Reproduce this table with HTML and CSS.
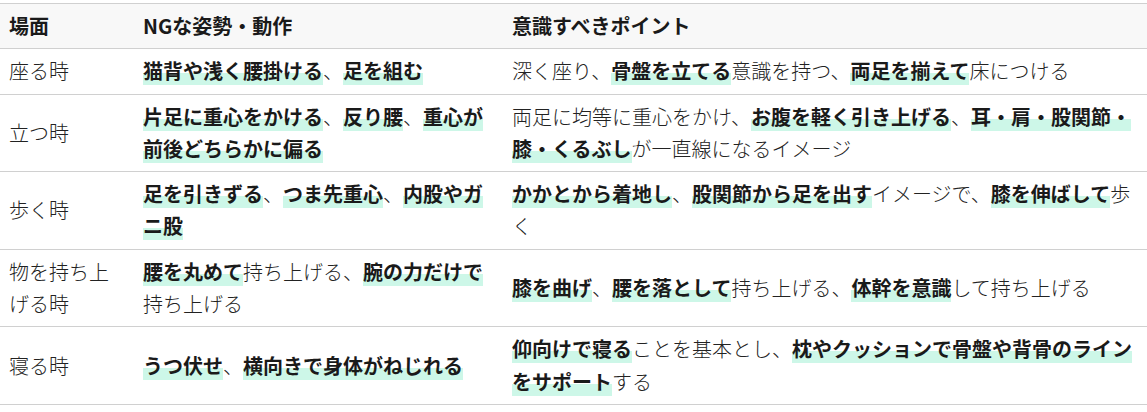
FILE: index.html
```html
<!DOCTYPE html>
<html lang="ja">
<head>
<meta charset="utf-8">
<title>姿勢のポイント</title>
<link rel="stylesheet" href="styles.css">
</head>
<body>
<table class="posture">
  <colgroup>
    <col class="c1"><col class="c2"><col class="c3">
  </colgroup>
  <thead>
    <tr><th>場面</th><th>NGな姿勢・動作</th><th>意識すべきポイント</th></tr>
  </thead>
  <tbody>
    <tr>
      <td>座る時</td>
      <td><b>猫背や浅く腰掛ける</b>、<b>足を組む</b></td>
      <td>深く座り、<b>骨盤を立てる</b>意識を持つ、<b>両足を揃えて</b>床につける</td>
    </tr>
    <tr>
      <td>立つ時</td>
      <td><b>片足に重心をかける</b>、<b>反り腰</b>、<b>重心が前後どちらかに偏る</b></td>
      <td>両足に均等に重心をかけ、<b>お腹を軽く引き上げる</b>、<b>耳・肩・股関節・膝・くるぶし</b>が一直線になるイメージ</td>
    </tr>
    <tr>
      <td>歩く時</td>
      <td><b>足を引きずる</b>、<b>つま先重心</b>、<b>内股やガニ股</b></td>
      <td><b>かかとから着地し</b>、<b>股関節から足を出す</b>イメージで、<b>膝を伸ばして</b>歩く</td>
    </tr>
    <tr>
      <td>物を持ち上げる時</td>
      <td><b>腰を丸めて</b>持ち上げる、<b>腕の力だけで</b>持ち上げる</td>
      <td><b>膝を曲げ</b>、<b>腰を落として</b>持ち上げる、<b>体幹を意識</b>して持ち上げる</td>
    </tr>
    <tr>
      <td>寝る時</td>
      <td><b>うつ伏せ</b>、<b>横向きで身体がねじれる</b></td>
      <td><b>仰向けで寝る</b>ことを基本とし、<b>枕やクッションで骨盤や背骨のラインをサポート</b>する</td>
    </tr>
  </tbody>
</table>
</body>
</html>
```
FILE: styles.css
```css
html, body {
  margin: 0;
  padding: 0;
  background: #ffffff;
}
body {
  padding-top: 3px;
  font-family: "Noto Sans CJK JP", "Noto Sans", sans-serif;
  font-size: 20px;
  color: #222222;
}
.posture {
  width: 1147px;
  border-collapse: collapse;
  table-layout: fixed;
}
.c1 { width: 134px; }
.c2 { width: 369px; }
.c3 { width: 644px; }
.posture th,
.posture td {
  border-top: 1px solid #d0d0d0;
  border-bottom: 1px solid #d0d0d0;
  padding: 6px 9px;
  line-height: 32.3px;
  text-align: left;
  vertical-align: middle;
}
.posture th {
  background: #f8f8f8;
  font-weight: 700;
  color: #1a1a1a;
}
.posture td {
  font-weight: 300;
}
.posture b {
  font-weight: 700;
  color: #1a1a1a;
  background: linear-gradient(transparent 60%, #cdf7e8 60%);
}
```
